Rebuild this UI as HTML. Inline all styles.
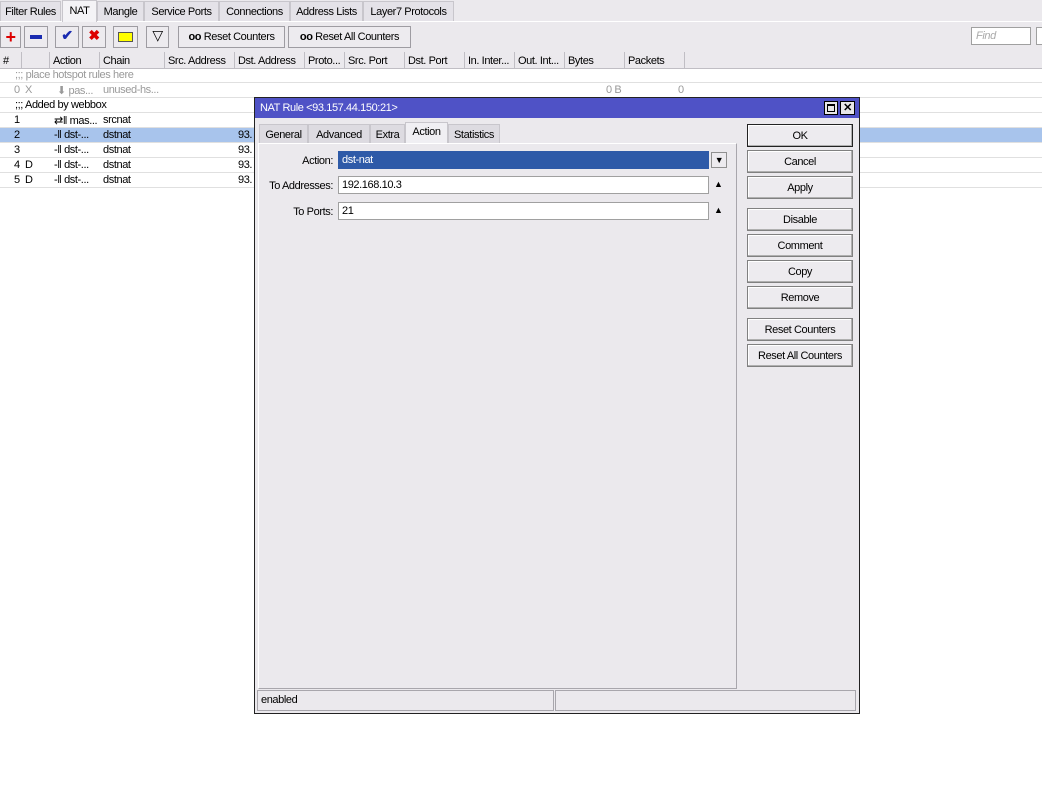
<!DOCTYPE html><html><head><style>
*{box-sizing:border-box}body{margin:0;width:1042px;height:799px;background:#fff;font-family:"Liberation Sans",sans-serif;font-size:11px;color:#000;position:relative;overflow:hidden;letter-spacing:-0.4px}
div,span{white-space:nowrap}
.a{position:absolute}
.tab{position:absolute;top:1px;height:20px;border:1px solid #c8c6cc;border-bottom:none;background:#e4e2e8;padding:4px 3px 0;overflow:hidden;text-align:center}
.btn{position:absolute;height:22px;border:1px solid #9e9ca2;background:#edebef;text-align:center;overflow:hidden}
.hd{position:absolute;top:52px;height:17px;border-right:1px solid #c0bec4;padding:3px 3px;overflow:hidden}
.row{position:absolute;left:0;width:1042px;height:15px;border-bottom:1px solid #e0e0e0}
.c{position:absolute;top:1px}
.db{position:absolute;left:747px;width:106px;height:23px;border:1px solid #808080;background:#edebef;text-align:center;padding-top:5px;box-shadow:inset -1px -1px #b0b0b0,inset 1px 1px #fff}
.lbl{position:absolute;text-align:right;width:80px;left:253px}
.fld{position:absolute;left:338px;width:371px;height:18px;border:1px solid #a0a0a0;background:#fff;padding:2px 3px}
</style></head><body>
<div class="a" style="left:0;top:0;width:1042px;height:52px;background:#ebe9ed"></div>
<div class="a" style="left:0;top:21px;width:1042px;height:1px;background:#fff"></div>
<div class="tab" style="left:0;width:61px">Filter Rules</div>
<div class="tab" style="left:62px;width:35px;background:#f4f3f6;top:0;height:22px;padding-top:4px">NAT</div>
<div class="tab" style="left:97px;width:47px">Mangle</div>
<div class="tab" style="left:144px;width:75px">Service Ports</div>
<div class="tab" style="left:219px;width:71px">Connections</div>
<div class="tab" style="left:290px;width:73px">Address Lists</div>
<div class="tab" style="left:363px;width:91px">Layer7 Protocols</div>
<div class="btn" style="left:0;top:26px;width:21px"><span style="color:#d00;font-size:18px;font-weight:bold;line-height:20px">+</span></div>
<div class="btn" style="left:24px;top:26px;width:24px"><div style="margin:8px auto;width:12px;height:4px;background:#1a2bb0"></div></div>
<div class="btn" style="left:55px;top:26px;width:24px;color:#1a2bb0;font-size:14px;font-weight:bold">✔</div>
<div class="btn" style="left:82px;top:26px;width:24px;color:#d00;font-size:14px;font-weight:bold">✖</div>
<div class="btn" style="left:113px;top:26px;width:25px"><div style="margin:5px auto;width:15px;height:10px;background:#ff0;border:1px solid #555"></div></div>
<div class="btn" style="left:146px;top:26px;width:23px;font-size:14px">▽</div>
<div class="btn" style="left:178px;top:26px;width:107px;padding-top:4px"><b>oo</b> Reset Counters</div>
<div class="btn" style="left:288px;top:26px;width:123px;padding-top:4px"><b>oo</b> Reset All Counters</div>
<div class="a" style="left:971px;top:27px;width:60px;height:18px;border:1px solid #a0a0a0;background:#fff;color:#aaa;font-style:italic;padding:2px 4px">Find</div>
<div class="a" style="left:1036px;top:27px;width:10px;height:18px;border:1px solid #a0a0a0;background:#fff"></div>
<div class="a" style="left:0;top:52px;width:1042px;height:17px;background:#ebe9ed;border-bottom:1px solid #c0bec4"></div>
<div class="hd" style="left:0;width:22px">#</div><div class="hd" style="left:22px;width:28px"></div><div class="hd" style="left:50px;width:50px">Action</div><div class="hd" style="left:100px;width:65px">Chain</div><div class="hd" style="left:165px;width:70px">Src. Address</div><div class="hd" style="left:235px;width:70px">Dst. Address</div><div class="hd" style="left:305px;width:40px">Proto...</div><div class="hd" style="left:345px;width:60px">Src. Port</div><div class="hd" style="left:405px;width:60px">Dst. Port</div><div class="hd" style="left:465px;width:50px">In. Inter...</div><div class="hd" style="left:515px;width:50px">Out. Int...</div><div class="hd" style="left:565px;width:60px">Bytes</div><div class="hd" style="left:625px;width:60px">Packets</div>
<div class="row" style="top:68px;color:#999"><span class="c" style="left:15px">;;; place hotspot rules here</span></div>
<div class="row" style="top:83px;color:#999"><span class="c" style="left:14px">0</span><span class="c" style="left:25px">X</span><span class="c" style="left:57px">⬇ pas...</span><span class="c" style="left:103px">unused-hs...</span><span class="c" style="left:606px">0 B</span><span class="c" style="left:678px">0</span></div>
<div class="row" style="top:98px"><span class="c" style="left:15px">;;; Added by webbox</span></div>
<div class="row" style="top:113px"><span class="c" style="left:14px">1</span><span class="c" style="left:54px">⇄‖ mas...</span><span class="c" style="left:103px">srcnat</span></div>
<div class="row" style="top:128px;background:#a8c4ec"><span class="c" style="left:14px">2</span><span class="c" style="left:54px">-‖ dst-...</span><span class="c" style="left:103px">dstnat</span><span class="c" style="left:238px">93.</span></div>
<div class="row" style="top:143px"><span class="c" style="left:14px">3</span><span class="c" style="left:54px">-‖ dst-...</span><span class="c" style="left:103px">dstnat</span><span class="c" style="left:238px">93.</span></div>
<div class="row" style="top:158px"><span class="c" style="left:14px">4</span><span class="c" style="left:25px">D</span><span class="c" style="left:54px">-‖ dst-...</span><span class="c" style="left:103px">dstnat</span><span class="c" style="left:238px">93.</span></div>
<div class="row" style="top:173px"><span class="c" style="left:14px">5</span><span class="c" style="left:25px">D</span><span class="c" style="left:54px">-‖ dst-...</span><span class="c" style="left:103px">dstnat</span><span class="c" style="left:238px">93.</span></div>
<div class="a" style="left:254px;top:97px;width:606px;height:617px;background:#ebe9ed;border:1px solid #222"></div>
<div class="a" style="left:255px;top:98px;width:604px;height:20px;background:#4f52c6;color:#fff;padding:4px 5px">NAT Rule &lt;93.157.44.150:21&gt;</div>
<div class="a" style="left:824px;top:101px;width:14px;height:14px;background:#e8e8e8;border:1px solid #000"><div style="margin:2px;width:8px;height:8px;border:1px solid #000;border-top-width:2px"></div></div>
<div class="a" style="left:840px;top:101px;width:15px;height:14px;background:#e8e8e8;border:1px solid #000;font-size:11px;font-weight:bold;text-align:center;line-height:12px">✕</div>
<div class="tab" style="left:259px;top:124px;width:49px;background:#dddbe1">General</div>
<div class="tab" style="left:308px;top:124px;width:62px;background:#dddbe1">Advanced</div>
<div class="tab" style="left:370px;top:124px;width:35px;background:#dddbe1">Extra</div>
<div class="tab" style="left:405px;top:122px;width:43px;height:22px;background:#f0eff3;padding-top:3px">Action</div>
<div class="tab" style="left:448px;top:124px;width:52px;background:#dddbe1">Statistics</div>
<div class="a" style="left:258px;top:143px;width:479px;height:546px;border:1px solid #a8a6ac;border-top-color:#fff;border-left-color:#fff"></div>
<div class="lbl" style="top:155px">Action:</div>
<div class="fld" style="top:151px;background:#2e5aa8;color:#fff;border-color:#2e5aa8">dst-nat</div>
<div class="a" style="left:711px;top:152px;width:16px;height:16px;border:1px solid #909090;background:#edebef;font-size:9px;text-align:center;line-height:14px">▼</div>
<div class="lbl" style="top:180px">To Addresses:</div>
<div class="fld" style="top:176px">192.168.10.3</div>
<div class="a" style="left:714px;top:179px;font-size:9px">▲</div>
<div class="lbl" style="top:206px">To Ports:</div>
<div class="fld" style="top:202px">21</div>
<div class="a" style="left:714px;top:205px;font-size:9px">▲</div>
<div class="db" style="top:124px;border-color:#222">OK</div>
<div class="db" style="top:150px">Cancel</div>
<div class="db" style="top:176px">Apply</div>
<div class="db" style="top:208px">Disable</div>
<div class="db" style="top:234px">Comment</div>
<div class="db" style="top:260px">Copy</div>
<div class="db" style="top:286px">Remove</div>
<div class="db" style="top:318px">Reset Counters</div>
<div class="db" style="top:344px">Reset All Counters</div>
<div class="a" style="left:257px;top:690px;width:297px;height:21px;border:1px solid #a8a6ac;padding:3px 3px">enabled</div>
<div class="a" style="left:555px;top:690px;width:301px;height:21px;border:1px solid #a8a6ac"></div>
</body></html>
